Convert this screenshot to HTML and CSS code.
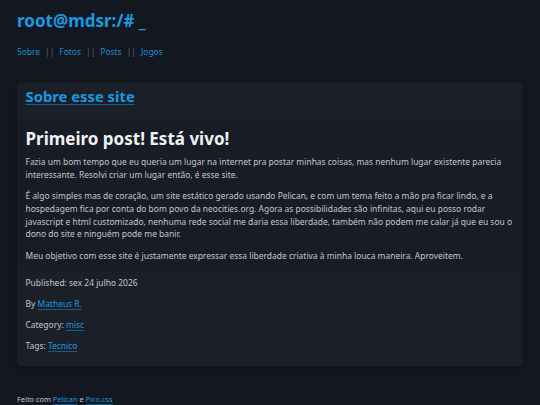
FILE: index.html
```html
<!DOCTYPE html>
<html lang="pt-br">
<head>
<meta charset="utf-8">
<title>root@mdsr</title>
<link rel="stylesheet" href="styles.css">
</head>
<body>
<header class="site-header">
  <h1 class="site-title"><a href="#">root@mdsr:/# _</a></h1>
  <nav class="site-nav">
    <a href="#">Sobre</a><span class="sep">||</span><a href="#">Fotos</a><span class="sep">||</span><a href="#">Posts</a><span class="sep">||</span><a href="#">Jogos</a>
  </nav>
</header>
<main>
  <article class="card">
    <header class="card-header">
      <h2 class="card-title"><a href="#">Sobre esse site</a></h2>
    </header>
    <div class="card-body">
      <h1 class="post-title">Primeiro post! Está vivo!</h1>
      <p>Fazia um bom tempo que eu queria um lugar na internet pra postar minhas coisas, mas nenhum lugar existente parecia interessante. Resolvi criar um lugar então, é esse site.</p>
      <p>É algo simples mas de coração, um site estático gerado usando Pelican, e com um tema feito a mão pra ficar lindo, e a hospedagem fica por conta do bom povo da neocities.org. Agora as possibilidades são infinitas, aqui eu posso rodar javascript e html customizado, nenhuma rede social me daria essa liberdade, também não podem me calar já que eu sou o dono do site e ninguém pode me banir.</p>
      <p>Meu objetivo com esse site é justamente expressar essa liberdade criativa à minha louca maneira. Aproveitem.</p>
    </div>
    <footer class="card-footer">
      <p>Published: sex 24 julho 2026</p>
      <p>By <a href="#">Matheus R.</a></p>
      <p>Category: <a href="#">misc</a></p>
      <p>Tags: <a href="#">Tecnico</a></p>
    </footer>
  </article>
</main>
<footer class="site-footer">
  Feito com <a href="#">Pelican</a> e <a href="#">Pico.css</a>
</footer>
</body>
</html>
```

FILE: styles.css
```css
html, body {
  margin: 0;
  padding: 0;
}
body {
  background: #13171f;
  color: #c2c7d0;
  font-family: "Noto Sans", "Open Sans", sans-serif;
  font-size: 8.45px;
  line-height: 12.7px;
  padding: 0 17px;
}
a {
  color: #1a9ae0;
  text-decoration: underline;
  text-decoration-color: rgba(26, 154, 224, 0.5);
  text-underline-offset: 2px;
}
p {
  margin: 0 0 8.5px;
}
.site-header {
  padding-top: 10px;
}
.site-title {
  margin: 0;
  font-size: 17px;
  line-height: 22px;
  font-weight: 700;
}
.site-title a {
  text-decoration: none;
  color: #1a9ae0;
}
.site-nav {
  margin-top: 14px;
  line-height: 12.7px;
}
.site-nav a {
  text-decoration: none;
  color: #1a8fd2;
}
.site-nav .sep {
  color: #5d6573;
  margin: 0 5px;
}
.card {
  margin-top: 24px;
  background: #181c25;
  border-radius: 4px;
  box-shadow: 0 1px 4px rgba(0, 0, 0, 0.35);
  overflow: hidden;
}
.card-header {
  background: #1a1f28;
  padding: 5.6px 8.5px 5.6px;
  border-bottom: 1px solid #1c212b;
}
.card-title {
  margin: 0 0 7.5px;
  font-size: 14.8px;
  line-height: 17px;
  font-weight: 700;
}
.card-body {
  padding: 8.5px 8.5px 0;
}
.post-title {
  margin: 1px 0 8.5px;
  font-size: 17px;
  line-height: 19px;
  font-weight: 700;
  color: #f0f1f3;
}
.card-footer {
  background: #1a1f28;
  border-top: 1px solid #1c212b;
  padding: 5px 8.5px 4px;
}
.site-footer {
  margin-top: 28px;
  font-size: 7.4px;
  line-height: 11px;
}
```
